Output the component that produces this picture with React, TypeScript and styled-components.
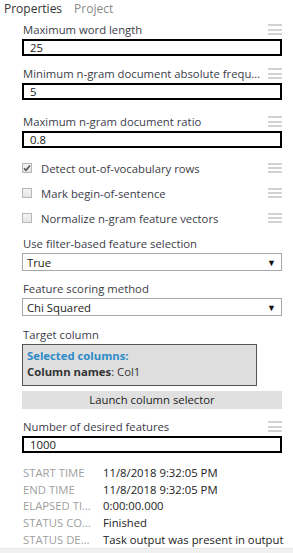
import React from "react";
import styled, { createGlobalStyle } from "styled-components";

const Global = createGlobalStyle`
  html, body { margin: 0; padding: 0; background: #fff; }
  body { font-family: "Open Sans", "Noto Sans", sans-serif; font-size: 11.3px; color: #333; }
  * { box-sizing: border-box; }
`;

const Page = styled.div`
  width: 293px;
  height: 553px;
  overflow: hidden;
  position: relative;
  display: flex;
  flex-direction: column;
`;

const Tabs = styled.div`
  display: flex;
  gap: 12px;
  padding: 1px 0 0 4px;
  height: 21px;
  font-size: 12px;
  line-height: 16px;
`;

const Tab = styled.div<{ $active?: boolean }>`
  color: ${(p) => (p.$active ? "#333" : "#8a8a8a")};
`;

const Panel = styled.div`
  display: flex;
  flex-direction: column;
  padding: 0 11px 0 22px;
  flex: 1;
`;

const Field = styled.div<{ $mt?: number }>`
  display: flex;
  flex-direction: column;
  margin-top: ${(p) => p.$mt ?? 0}px;
`;

const LabelRow = styled.div`
  display: flex;
  align-items: center;
  height: 17px;
  margin-bottom: 1px;
`;

const Label = styled.div`
  flex: 1;
  min-width: 0;
  padding-left: 1px;
  white-space: nowrap;
  overflow: hidden;
  text-overflow: ellipsis;
  color: #3c3c4a;
  line-height: 16px;
`;

const Menu = styled.div`
  width: 14px;
  flex: none;
  margin-left: 6px;
  display: flex;
  flex-direction: column;
  gap: 2.4px;
  & > span {
    display: block;
    height: 2px;
    background: #d2d2d2;
  }
`;

const Handle = () => (
  <Menu>
    <span />
    <span />
    <span />
  </Menu>
);

const TextBox = styled.div`
  height: 17px;
  border: 2px solid #000;
  padding: 0 0 0 6px;
  line-height: 13px;
  color: #222;
`;

const CheckRow = styled.div<{ $mt?: number }>`
  display: flex;
  align-items: center;
  height: 16px;
  margin-top: ${(p) => p.$mt ?? 0}px;
`;

const Box = styled.div`
  width: 10px;
  height: 10px;
  border: 1px solid #b8b8b8;
  background: linear-gradient(#f4f4f4, #e4e4e4);
  display: flex;
  align-items: center;
  justify-content: center;
  margin-right: 9px;
  flex: none;
`;

const CheckText = styled.div`
  flex: 1;
  color: #3c3c4a;
`;

const Select = styled.div`
  height: 18px;
  border: 1px solid #a8a8a8;
  display: flex;
  align-items: center;
  justify-content: space-between;
  padding: 0 5px 0 4px;
  color: #222;
`;

const Arrow = styled.span`
  font-size: 9px;
  color: #111;
`;

const ColumnsBox = styled.div`
  width: 235px;
  height: 42px;
  border: 1px solid #555;
  background: #dedede;
  padding: 3px 0 0 4px;
  line-height: 16px;
`;

const SelTitle = styled.div`
  font-weight: bold;
  color: #2e8bc9;
`;

const ColNames = styled.div`
  color: #333;
`;

const Launch = styled.div`
  margin-top: 5px;
  height: 18px;
  background: #e0e0e0;
  text-align: center;
  line-height: 18px;
  color: #222;
`;

const Meta = styled.div`
  display: grid;
  grid-template-columns: 80px 1fr;
  row-gap: 1px;
  margin-top: 11px;
  padding-left: 1px;
`;

const MetaKey = styled.div`
  text-transform: uppercase;
  color: #a0a0a0;
  height: 15px;
  line-height: 18px;
  overflow: hidden;
  white-space: nowrap;
  text-overflow: ellipsis;
  padding-right: 8px;
`;

const MetaVal = styled.div`
  color: #222;
  height: 15.7px;
  line-height: 17px;
  white-space: nowrap;
`;

const Footer = styled.div`
  position: absolute;
  left: 0;
  right: 0;
  bottom: 0;
  height: 5px;
  background: #f0f0f0;
  border-top: 1px solid #e6e6e6;
`;

const Check = () => (
  <svg width="8" height="8" viewBox="0 0 8 8">
    <path d="M1 4.2 L3 6.2 L7 1.5" stroke="#555" strokeWidth="1.6" fill="none" />
  </svg>
);

export default function App() {
  return (
    <>
      <Global />
      <Page>
        <Tabs>
          <Tab $active>Properties</Tab>
          <Tab>Project</Tab>
        </Tabs>
        <Panel>
          <Field>
            <LabelRow>
              <Label>Maximum word length</Label>
              <Handle />
            </LabelRow>
            <TextBox>25</TextBox>
          </Field>
          <Field $mt={9}>
            <LabelRow>
              <Label>Minimum n-gram document absolute frequency</Label>
              <Handle />
            </LabelRow>
            <TextBox>5</TextBox>
          </Field>
          <Field $mt={13}>
            <LabelRow>
              <Label>Maximum n-gram document ratio</Label>
              <Handle />
            </LabelRow>
            <TextBox>0.8</TextBox>
          </Field>
          <CheckRow $mt={12}>
            <Box>
              <Check />
            </Box>
            <CheckText>Detect out-of-vocabulary rows</CheckText>
            <Handle />
          </CheckRow>
          <CheckRow $mt={9}>
            <Box />
            <CheckText>Mark begin-of-sentence</CheckText>
            <Handle />
          </CheckRow>
          <CheckRow $mt={9}>
            <Box />
            <CheckText>Normalize n-gram feature vectors</CheckText>
            <Handle />
          </CheckRow>
          <Field $mt={9}>
            <LabelRow>
              <Label>Use filter-based feature selection</Label>
            </LabelRow>
            <Select>
              True<Arrow>▼</Arrow>
            </Select>
          </Field>
          <Field $mt={9}>
            <LabelRow>
              <Label>Feature scoring method</Label>
            </LabelRow>
            <Select>
              Chi Squared<Arrow>▼</Arrow>
            </Select>
          </Field>
          <Field $mt={10}>
            <LabelRow>
              <Label>Target column</Label>
            </LabelRow>
            <ColumnsBox>
              <SelTitle>Selected columns:</SelTitle>
              <ColNames>
                <b>Column names</b>: Col1
              </ColNames>
            </ColumnsBox>
          </Field>
          <Launch>Launch column selector</Launch>
          <Field $mt={9}>
            <LabelRow>
              <Label>Number of desired features</Label>
              <Handle />
            </LabelRow>
            <TextBox>1000</TextBox>
          </Field>
          <Meta>
            <MetaKey>Start time</MetaKey>
            <MetaVal>11/8/2018 9:32:05 PM</MetaVal>
            <MetaKey>End time</MetaKey>
            <MetaVal>11/8/2018 9:32:05 PM</MetaVal>
            <MetaKey>Elapsed time</MetaKey>
            <MetaVal>0:00:00.000</MetaVal>
            <MetaKey>Status code</MetaKey>
            <MetaVal>Finished</MetaVal>
            <MetaKey>Status details</MetaKey>
            <MetaVal>Task output was present in output</MetaVal>
          </Meta>
        </Panel>
        <Footer />
      </Page>
    </>
  );
}
